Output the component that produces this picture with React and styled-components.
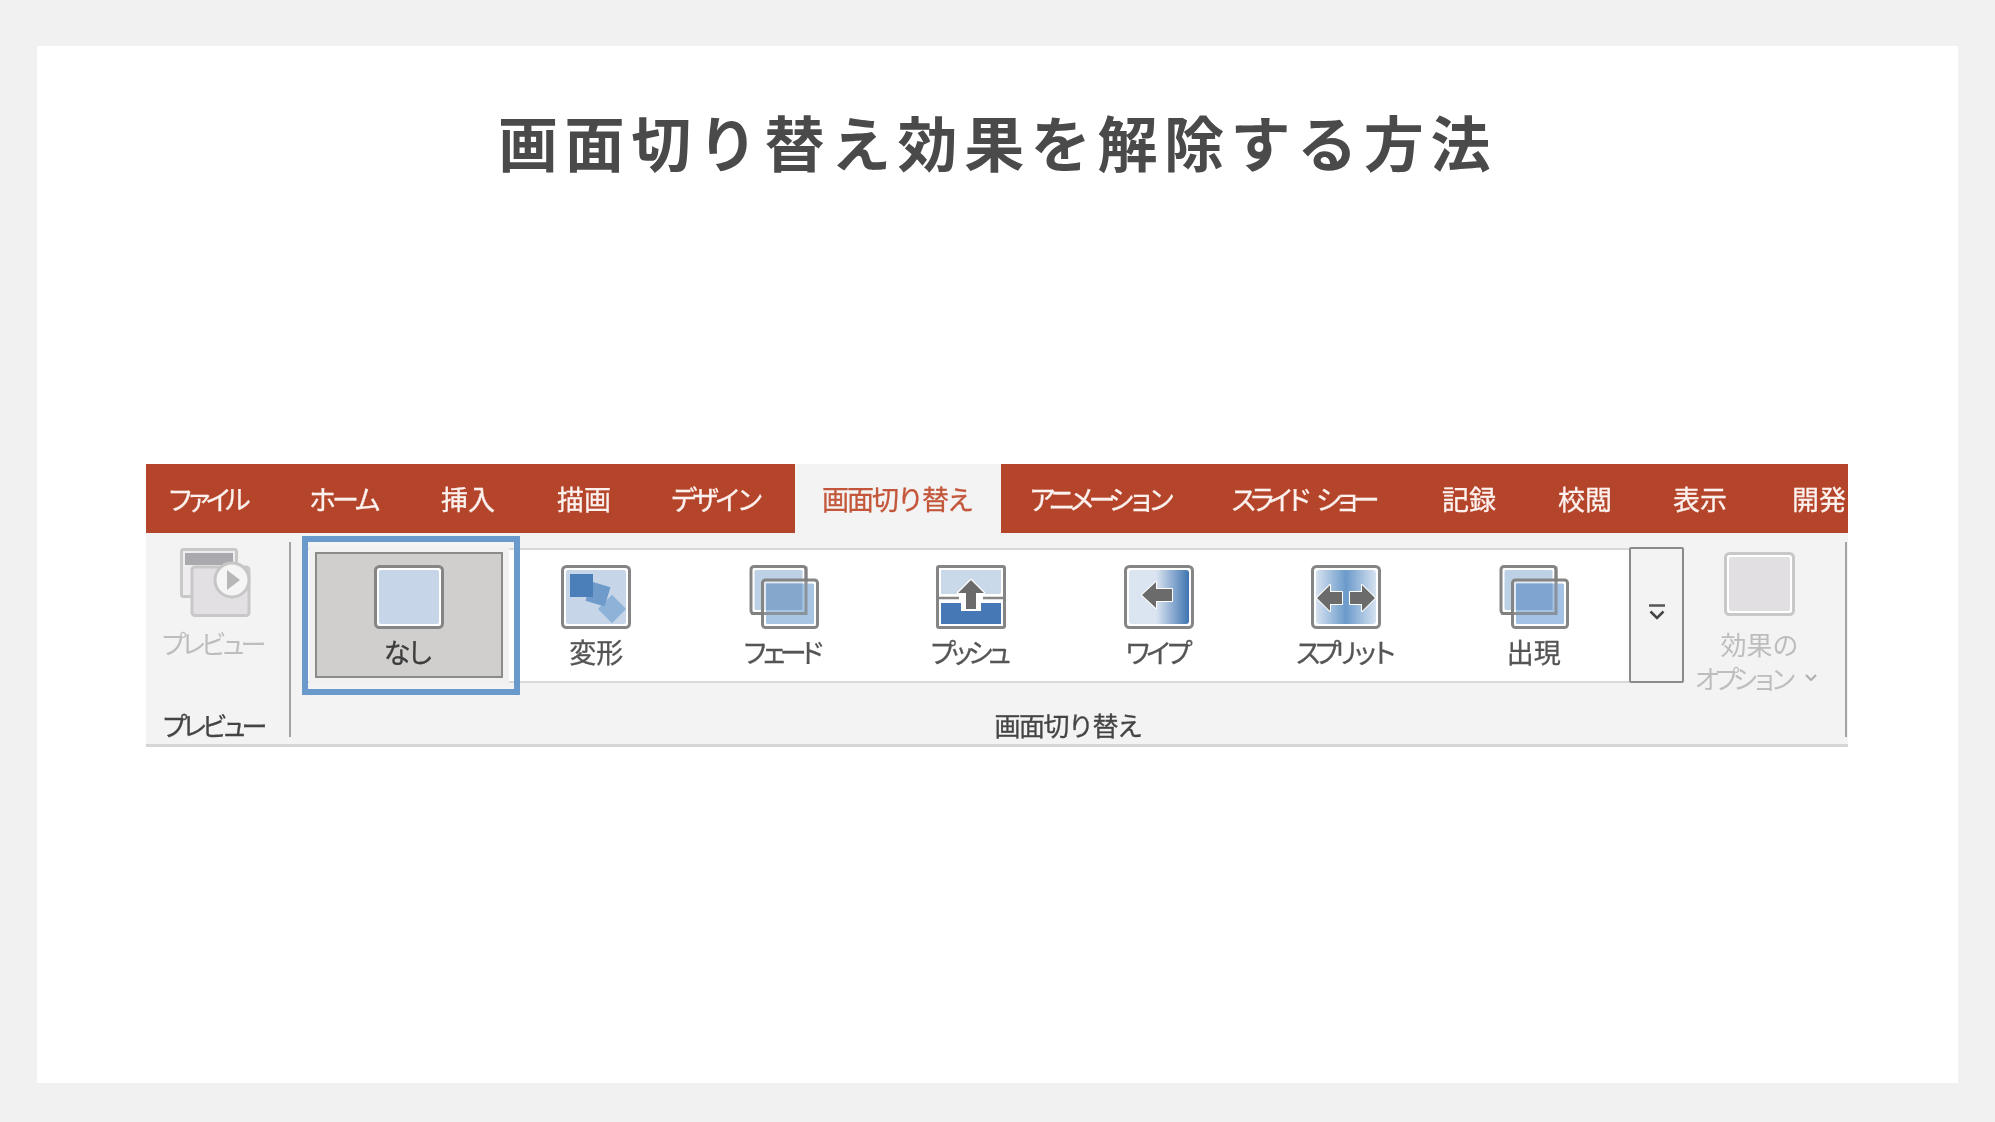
import React from 'react';
import styled, { createGlobalStyle } from 'styled-components';

const GlobalStyle = createGlobalStyle`
  html, body { margin: 0; background: #f1f1f1; }
  body { font-family: "Noto Sans CJK JP", "Liberation Sans", sans-serif; }
`;

const Page = styled.div`
  box-sizing: border-box;
  height: 1122px;
  padding: 46px 37px 39px;
`;

const Slide = styled.main`
  height: 1037px;
  background: #fff;
  padding-top: 65px;
  box-sizing: border-box;
`;

const Title = styled.h1`
  margin: 0;
  text-align: center;
  font-size: 60px;
  line-height: 60px;
  font-weight: 700;
  letter-spacing: 6.6px;
  color: #4a4a4a;
`;

const Ribbon = styled.section`
  width: 1702px;
  margin: 293px 0 0 109px;
  filter: blur(0.6px);
`;

const Tabs = styled.nav`
  display: flex;
  height: 69px;
  background: #b5452a;
  overflow: hidden;
`;

const Tab = styled.div`
  flex: none;
  box-sizing: border-box;
  width: ${(p) => p.$w}px;
  padding-right: ${(p) => (p.$pr || 0) + Math.abs(p.$track || 0)}px;
  display: flex;
  align-items: center;
  justify-content: center;
  white-space: pre;
  font-size: 27px;
  -webkit-text-stroke: 0.3px currentColor;
  letter-spacing: ${(p) => p.$track || 0}px;
  word-spacing: ${(p) => p.$word || 0}px;
  color: ${(p) => (p.$active ? '#c4573b' : '#fbf1ee')};
  background: ${(p) => (p.$active ? '#f3f3f3' : 'transparent')};
`;

const Body = styled.div`
  display: flex;
  box-sizing: border-box;
  height: 214px;
  padding-right: 1px;
  background: #f3f3f3;
  border-bottom: 3px solid #d6d6d6;
`;

const Group = styled.div`
  display: flex;
  flex-direction: column;
  flex: ${(p) => (p.$grow ? '1' : 'none')};
  width: ${(p) => (p.$grow ? 'auto' : '143px')};
`;

const GroupLabel = styled.div`
  margin-top: auto;
  margin-bottom: 1px;
  height: 36px;
  line-height: 36px;
  text-align: center;
  font-size: 26px;
  -webkit-text-stroke: 0.3px currentColor;
  color: #444;
  letter-spacing: ${(p) => p.$track || 0}px;
  padding-right: ${(p) => p.$pr || 0}px;
`;

const Divider = styled.div`
  flex: none;
  width: 2px;
  margin: 9px 0 7px;
  background: #a3a3a3;
`;

const PreviewButton = styled.div`
  display: flex;
  flex-direction: column;
  align-items: center;
  padding: 15px 4px 0 0;
`;

const DimText = styled.div`
  font-size: 26px;
  line-height: ${(p) => p.$line || 34}px;
  white-space: nowrap;
  color: #bdbdbd;
  margin-top: ${(p) => p.$top || 0}px;
  margin-left: ${(p) => p.$shift || 0}px;
  letter-spacing: ${(p) => p.$track || 0}px;
  display: flex;
  align-items: center;
`;

const TopRow = styled.div`
  display: flex;
  padding-top: 14px;
`;

const Gallery = styled.div`
  display: flex;
  box-sizing: border-box;
  width: 1323px;
  height: 135px;
  margin: 1px 0 0 15px;
  padding: 2px 0 0 9px;
  background: #fff;
  border-top: 2px solid #d8d8d8;
  border-bottom: 2px solid #d8d8d8;
`;

const Item = styled.div`
  position: relative;
  flex: none;
  box-sizing: border-box;
  width: 187.5px;
  height: 126px;
  padding-top: 11px;
  display: flex;
  flex-direction: column;
  align-items: center;
  border: 2.5px solid ${(p) => (p.$selected ? '#8b8b89' : 'transparent')};
  background: ${(p) => (p.$selected ? '#d0cfcd' : 'transparent')};
  box-shadow: ${(p) => (p.$selected ? '0 0 0 6px #f1f1f1' : 'none')};

  &::after {
    content: '';
    display: ${(p) => (p.$selected ? 'block' : 'none')};
    position: absolute;
    left: -15px;
    right: -19px;
    top: -18px;
    bottom: -19px;
    border: 6px solid #6a9acc;
  }
`;

const ItemLabel = styled.div`
  margin-top: 5px;
  margin-left: ${(p) => p.$track || 0}px;
  font-size: 27px;
  line-height: 36px;
  white-space: nowrap;
  -webkit-text-stroke: 0.3px currentColor;
  color: ${(p) => (p.$selected ? '#3d3d3d' : '#555')};
  letter-spacing: ${(p) => p.$track || 0}px;
`;

const ScrollButton = styled.div`
  flex: none;
  box-sizing: border-box;
  width: 55px;
  height: 136px;
  padding-bottom: 7px;
  display: flex;
  align-items: center;
  justify-content: center;
  background: #f3f3f3;
  border: 2.5px solid #8a8a8a;
  border-radius: 2px;
`;

const OptionsButton = styled.div`
  flex: none;
  width: 161px;
  display: flex;
  flex-direction: column;
  align-items: center;
  box-sizing: border-box;
  padding: 5px 10px 0 0;
`;

const FRAME = '#858585';

function NoneIcon() {
  return (
    <svg width='70' height='64' viewBox='0 0 70 64'>
      <rect x='1.5' y='1.5' width='67' height='61' rx='4' fill='#fff' stroke={FRAME} strokeWidth='3' />
      <rect x='5' y='5' width='60' height='54' rx='2' fill='#c6d6e8' />
    </svg>
  );
}

function MorphIcon() {
  return (
    <svg width='70' height='64' viewBox='0 0 70 64'>
      <rect x='1.5' y='1.5' width='67' height='61' rx='4' fill='#fff' stroke={FRAME} strokeWidth='3' />
      <rect x='5' y='5' width='60' height='54' rx='2' fill='#c6d6e8' />
      <rect x='41' y='34' width='20' height='20' fill='#8fb2d8' transform='rotate(45 51 44)' />
      <rect x='27' y='19' width='20' height='20' fill='#6f9bcb' transform='rotate(17 37 29)' />
      <rect x='9' y='9' width='23' height='23' fill='#4a7fba' />
    </svg>
  );
}

function OverlapIcon({ back, front, lower }) {
  return (
    <svg width='70' height='64' viewBox='0 0 70 64'>
      <rect x='2' y='1.5' width='55' height='47' rx='3' fill='#fff' stroke={FRAME} strokeWidth='3' />
      <rect x='5.5' y='5' width='48' height='40' rx='1.5' fill={back} />
      <rect x='13.5' y='15' width='55' height='47.5' rx='3' fill='#fff' fillOpacity='0.55' stroke={FRAME} strokeWidth='3' />
      <rect x='17' y='18.5' width='48' height='40.5' rx='1.5' fill={lower} />
      <rect x='17' y='18.5' width='36.5' height='26.5' fill={front} />
      <path d='M2 48.5H57V1.5' fill='none' stroke='#7d7d7d' strokeOpacity='0.7' strokeWidth='3' />
    </svg>
  );
}

function PushIcon() {
  return (
    <svg width='70' height='64' viewBox='0 0 70 64'>
      <rect x='1.5' y='1.5' width='67' height='61' rx='1.5' fill='#fff' stroke={FRAME} strokeWidth='3' />
      <path d='M5 5H65V27Q65 29 63 29H5Z' fill='#c9d9ea' />
      <path d='M2 33H23M47 33H68' stroke={FRAME} strokeWidth='2.5' />
      <path d='M5 38H25V46H45V38H65V59H5Z' fill='#4578b4' />
      <path d='M35 15L48 28H40V44H30V28H22Z' fill='#6b6b6b' stroke='#fff' strokeWidth='2.5' paintOrder='stroke' strokeLinejoin='round' />
    </svg>
  );
}

function WipeIcon() {
  return (
    <svg width='70' height='64' viewBox='0 0 70 64'>
      <defs>
        <linearGradient id='wipeFill' x1='0' x2='1' y1='0' y2='0'>
          <stop offset='0.45' stopColor='#dbe5f1' />
          <stop offset='1' stopColor='#3f74b1' />
        </linearGradient>
      </defs>
      <rect x='1.5' y='1.5' width='67' height='61' rx='4' fill='#fff' stroke={FRAME} strokeWidth='3' />
      <rect x='5' y='5' width='60' height='54' rx='3' fill='url(#wipeFill)' />
      <path d='M18 30L32 17V24H48V36H32V43Z' fill='#6b6b6b' stroke='#fff' strokeWidth='2' paintOrder='stroke' strokeLinejoin='round' />
    </svg>
  );
}

function SplitIcon() {
  return (
    <svg width='70' height='64' viewBox='0 0 70 64'>
      <defs>
        <linearGradient id='splitFill' x1='0' x2='1' y1='0' y2='0'>
          <stop offset='0' stopColor='#d6e2f0' />
          <stop offset='0.5' stopColor='#6b9aca' />
          <stop offset='1' stopColor='#d6e2f0' />
        </linearGradient>
      </defs>
      <rect x='1.5' y='1.5' width='67' height='61' rx='4' fill='#fff' stroke={FRAME} strokeWidth='3' />
      <rect x='5' y='5' width='60' height='54' rx='3' fill='url(#splitFill)' />
      <path d='M6 33L19 20V27H31V39H19V46Z' fill='#6b6b6b' stroke='#fff' strokeWidth='2' paintOrder='stroke' strokeLinejoin='round' />
      <path d='M64 33L51 20V27H39V39H51V46Z' fill='#6b6b6b' stroke='#fff' strokeWidth='2' paintOrder='stroke' strokeLinejoin='round' />
    </svg>
  );
}

function PreviewIcon() {
  return (
    <svg width='71' height='69' viewBox='0 0 71 69'>
      <rect x='1.5' y='1.5' width='55' height='47' rx='2' fill='#eeecee' stroke='#c8c8c8' strokeWidth='3' />
      <rect x='5' y='5' width='48' height='12' fill='#aaa9ae' />
      <rect x='12' y='19' width='57' height='48.5' rx='3' fill='#e3e0e4' stroke='#c8c8c8' strokeWidth='3' />
      <circle cx='52' cy='32' r='17' fill='#f5f5f5' stroke='#c6c6c6' strokeWidth='3' />
      <path d='M47 22L60 32L47 42Z' fill='#b7b7b7' />
    </svg>
  );
}

function OptionsIcon() {
  return (
    <svg width='71' height='64' viewBox='0 0 71 64'>
      <rect x='1.5' y='1.5' width='68' height='61' rx='4' fill='#fff' stroke='#c8c8c8' strokeWidth='3' />
      <rect x='5' y='5' width='61' height='54' rx='2' fill='#e2dfe2' />
    </svg>
  );
}

function MoreGlyph() {
  return (
    <svg width='16' height='16' viewBox='0 0 16 16'>
      <path d='M0 1.5H16' stroke='#555' strokeWidth='2.5' />
      <path d='M1.5 7.5L8 14L14.5 7.5' fill='none' stroke='#444' strokeWidth='2.5' />
    </svg>
  );
}

function Caret() {
  return (
    <svg width='14' height='10' viewBox='0 0 14 10' style={{ marginLeft: 14 }}>
      <path d='M2 2L7 7L12 2' fill='none' stroke='#b0b0b0' strokeWidth='2.2' />
    </svg>
  );
}

const tabs = [
  { label: 'ファイル', w: 126, track: -8 },
  { label: 'ホーム', w: 146, track: -4 },
  { label: '挿入', w: 100 },
  { label: '描画', w: 132 },
  { label: 'デザイン', w: 145, pr: 11, track: -5 },
  { label: '画面切り替え', w: 206, track: -2, active: true },
  { label: 'アニメーション', w: 202, track: -7 },
  { label: 'スライド ショー', w: 204, track: -8.5, word: 14 },
  { label: '記録', w: 124 },
  { label: '校閲', w: 108 },
  { label: '表示', w: 122 },
  { label: '開発', w: 116 },
];

const items = [
  { label: 'なし', icon: <NoneIcon />, track: -4, selected: true },
  { label: '変形', icon: <MorphIcon /> },
  { label: 'フェード', icon: <OverlapIcon back='#bcd0e6' front='#86a7cc' lower='#a9c5e4' />, track: -8 },
  { label: 'プッシュ', icon: <PushIcon />, track: -8 },
  { label: 'ワイプ', icon: <WipeIcon />, track: -6.5 },
  { label: 'スプリット', icon: <SplitIcon />, track: -8 },
  { label: '出現', icon: <OverlapIcon back='#bcd0e6' front='#7fa4cf' lower='#a4c2e4' /> },
];

export default function App() {
  return (
    <Page>
      <GlobalStyle />
      <Slide>
        <Title>画面切り替え効果を解除する方法</Title>
        <Ribbon>
          <Tabs>
            {tabs.map((tab) => (
              <Tab key={tab.label} $w={tab.w} $pr={tab.pr} $track={tab.track} $word={tab.word} $active={tab.active}>
                {tab.label}
              </Tab>
            ))}
          </Tabs>
          <Body>
            <Group>
              <PreviewButton>
                <PreviewIcon />
                <DimText $top={9} $track={-6} $shift={-10}>プレビュー</DimText>
              </PreviewButton>
              <GroupLabel $track={-6} $pr={12}>プレビュー</GroupLabel>
            </Group>
            <Divider />
            <Group $grow>
              <TopRow>
                <Gallery>
                  {items.map((item) => (
                    <Item key={item.label} $selected={item.selected}>
                      {item.icon}
                      <ItemLabel $track={item.track} $selected={item.selected}>{item.label}</ItemLabel>
                    </Item>
                  ))}
                </Gallery>
                <ScrollButton>
                  <MoreGlyph />
                </ScrollButton>
                <OptionsButton>
                  <OptionsIcon />
                  <DimText $top={11}>効果の</DimText>
                  <DimText $track={-7} $line={33} $shift={-7}>オプション<Caret /></DimText>
                </OptionsButton>
              </TopRow>
              <GroupLabel $track={-1.5}>画面切り替え</GroupLabel>
            </Group>
            <Divider />
          </Body>
        </Ribbon>
      </Slide>
    </Page>
  );
}
